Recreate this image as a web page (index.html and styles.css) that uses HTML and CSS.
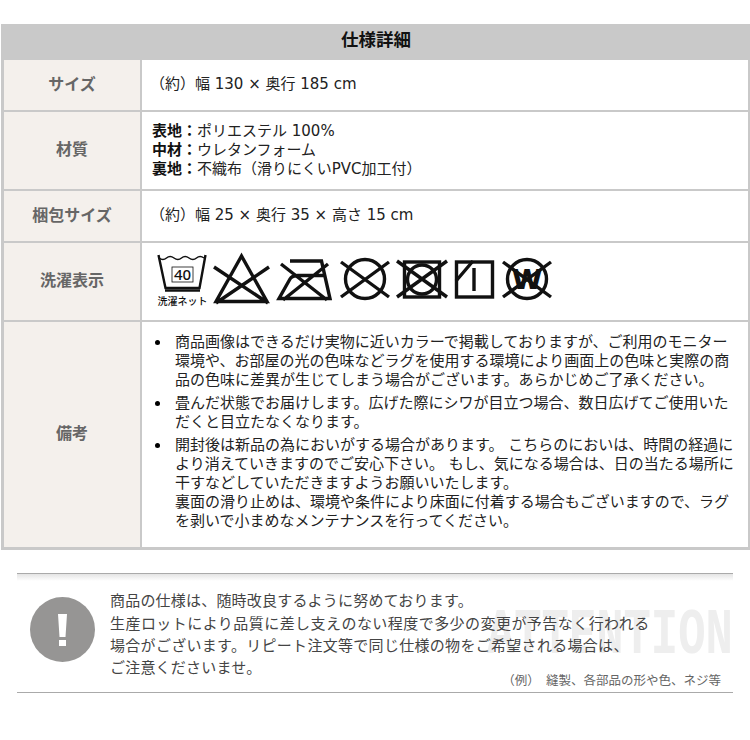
FILE: index.html
```html
<!DOCTYPE html>
<html lang="ja">
<head>
<meta charset="utf-8">
<title>仕様詳細</title>
<link rel="stylesheet" href="styles.css">
</head>
<body>
<section class="spec">
  <h2 class="spec-title">仕様詳細</h2>
  <div class="label row-s">サイズ</div>
  <div class="value indent">（約）幅 130 × 奥行 185 cm</div>
  <div class="label row-m">材質</div>
  <div class="value material">
    <div><b>表地：</b>ポリエステル 100%</div>
    <div><b>中材：</b>ウレタンフォーム</div>
    <div><b>裏地：</b>不織布（滑りにくいPVC加工付）</div>
  </div>
  <div class="label row-s">梱包サイズ</div>
  <div class="value indent">（約）幅 25 × 奥行 35 × 高さ 15 cm</div>
  <div class="label row-m">洗濯表示</div>
  <div class="value icons">
    <svg class="care w61" viewBox="150 250 61 60">
      <path class="s2" d="M158.500 255 165.500 288H199.500L205.500 255"/>
      <path class="s1" d="M159 258q4 3 7.500 0t7.500 0 7.500 0 7.500 0 7.500 0 7.500 0"/>
      <rect class="s0" x="172" y="267" width="21" height="15"/>
      <text class="num" x="182.500" y="280">40</text>
      <path class="s2" d="M165 290.500H200"/>
      <text class="net" x="182.500" y="305">洗濯ネット</text>
    </svg>
    <svg class="care w62" viewBox="211 250 62 60">
      <path class="s3" d="M241.500 256 216 301.500H267ZM214 267 268 303M269 267 216 303"/>
    </svg>
    <svg class="care w63" viewBox="273 250 63 60">
      <path class="s3" d="M290 261H321.500L330 298.500H279L290 279Q292 275.500 298 275.500H325M281 264 327 300M328 264 283 300"/>
    </svg>
    <svg class="care w60" viewBox="336 250 60 60">
      <circle class="s3" cx="365" cy="279" r="19.500"/>
      <path class="s3" d="M341 262 389 297M389 262 341 297"/>
    </svg>
    <svg class="care w54" viewBox="396 250 54 60">
      <rect class="s3" x="404.500" y="262" width="35" height="35"/>
      <circle class="s3" cx="422" cy="279.500" r="14.500"/>
      <path class="s3" d="M397 261 447 297M447 261 397 297"/>
    </svg>
    <svg class="care w48" viewBox="450 250 48 60">
      <rect class="s3" x="456.500" y="262" width="36" height="35"/>
      <path class="s3" d="M456 281 473 261M474 268V291"/>
    </svg>
    <svg class="care w60" viewBox="498 250 60 60">
      <circle class="s3" cx="527" cy="279" r="19.500"/>
      <text class="wash" x="527" y="289">W</text>
      <path class="s3" d="M503 262 551 297M551 262 503 297"/>
    </svg>
  </div>
  <div class="label row-l">備考</div>
  <div class="value notes">
    <ul>
      <li>商品画像はできるだけ実物に近いカラーで掲載しておりますが、ご利用のモニター環境や、お部屋の光の色味などラグを使用する環境により画面上の色味と実際の商品の色味に差異が生じてしまう場合がございます。あらかじめご了承ください。</li>
      <li>畳んだ状態でお届けします。広げた際にシワが目立つ場合、数日広げてご使用いただくと目立たなくなります。</li>
      <li>開封後は新品の為においがする場合があります。 こちらのにおいは、時間の経過により消えていきますのでご安心下さい。 もし、気になる場合は、日の当たる場所に干すなどしていただきますようお願いいたします。<br>裏面の滑り止めは、環境や条件により床面に付着する場合もございますので、ラグを剥いで小まめなメンテナンスを行ってください。</li>
    </ul>
  </div>
</section>
<aside class="notice">
  <span class="watermark">ATTENTION</span>
  <svg class="alert" viewBox="0 0 65 65">
    <circle cx="32.500" cy="32.500" r="32.500"/>
    <path d="M28 17H37L35.500 40H29.500ZM29 43H36V49H29Z"/>
  </svg>
  <div class="notice-text">
    <p>商品の仕様は、随時改良するように努めております。</p>
    <p class="wide">生産ロットにより品質に差し支えのない程度で多少の変更が予告なく行われる</p>
    <p class="mid">場合がございます。リピート注文等で同じ仕様の物をご希望される場合は、</p>
    <p>ご注意くださいませ。</p>
  </div>
  <small class="example">（例）　縫製、各部品の形や色、ネジ等</small>
</aside>
</body>
</html>
```
FILE: styles.css
```css
* { box-sizing: border-box; }
html, body { margin: 0; padding: 0; background: #fff; }
body {
  font-family: "DejaVu Sans", "Noto Sans CJK JP", sans-serif;
  font-size: 15px;
  line-height: 19px;
  color: #222;
  padding-top: 24px;
}
.spec {
  margin-left: 1px;
  display: grid;
  grid-template-columns: 136px 1fr;
  grid-template-rows: 34px 50px 77px 50px 77px 225px;
  column-gap: 2px;
  row-gap: 2px;
  padding: 0 2px 3px 3px;
  background: #c9c9c9;
}
.spec-title {
  grid-column: 1 / -1;
  margin: 0;
  text-align: center;
  font-size: 17.500px;
  line-height: 32px;
  font-weight: 700;
  color: #111;
}
.label {
  background: #f4f0ec;
  color: #666;
  font-size: 16px;
  font-weight: 700;
  display: flex;
  align-items: center;
  justify-content: center;
  padding-bottom: 2px;
}
.value {
  background: #fff;
  padding: 0 0 2px 10px;
  display: flex;
  flex-direction: column;
  justify-content: center;
}
.value b { color: #111; }
.indent { padding-left: 8px; }
.material { padding-bottom: 0; }
.icons {
  flex-direction: row;
  justify-content: flex-start;
  align-items: flex-start;
  padding: 7px 0 0 8px;
}
.care { height: 60px; flex: none; }
.w61 { width: 61px; }
.w62 { width: 62px; }
.w63 { width: 63px; }
.w60 { width: 60px; }
.w54 { width: 54px; }
.w48 { width: 48px; }
.s0, .s1, .s2, .s3 { fill: none; stroke: #111; }
.s0 { stroke-width: .8; }
.s1 { stroke-width: 1.5; }
.s2 { stroke-width: 2.4; }
.s3 { stroke-width: 3.4; }
.num, .net, .wash { text-anchor: middle; fill: #111; }
.num { font-family: "Noto Sans", sans-serif; font-size: 15px; font-weight: 500; }
.net { font-family: "Noto Sans CJK JP", sans-serif; font-size: 10px; font-weight: 500; }
.wash { font-family: "Noto Sans", sans-serif; font-size: 29px; font-weight: 900; }
.notes { padding: 11px 0 0; justify-content: flex-start; }
.notes ul { margin: 0; padding: 0 13px 0 33px; list-style: none; }
.notes li { position: relative; margin-bottom: 4px; }
.notes li:last-child { margin-bottom: 0; }
.notes li::before {
  content: "";
  position: absolute;
  left: -20px;
  top: 7px;
  width: 5px;
  height: 5px;
  border-radius: 50%;
  background: #000;
}
.notice {
  position: relative;
  margin: 23px 17px 0;
  height: 120px;
  display: flex;
  align-items: flex-start;
  gap: 15px;
  padding: 16px 0 0 13px;
  border-top: 1.500px solid #aaa;
  border-bottom: 1.500px solid #aaa;
  color: #444;
}
.notice::before, .notice::after {
  content: "";
  position: absolute;
  left: 0;
  right: 0;
  height: 7px;
  background: linear-gradient(#e4e4e4, #fff);
}
.notice::before { top: 0; }
.notice::after { bottom: -8px; }
.alert { width: 65px; height: 65px; flex: none; margin-top: 7px; }
.alert circle { fill: #969594; }
.alert path { fill: #fff; }
.notice-text { position: relative; }
.notice-text p { margin: 0; line-height: 22px; white-space: nowrap; letter-spacing: .2px; }
.notice-text .wide { margin-top: 1px; letter-spacing: .45px; }
.notice-text .mid { letter-spacing: .3px; }
.watermark {
  position: absolute;
  left: 470px;
  top: 22px;
  width: 390px;
  font-family: "Liberation Mono", monospace;
  font-size: 65px;
  line-height: 80px;
  font-weight: 700;
  color: #eeeeee;
  transform: scaleX(.7);
  transform-origin: 0 0;
}
.example {
  position: absolute;
  right: 12px;
  bottom: 2px;
  font-size: 12.500px;
  line-height: 18px;
  color: #666;
}
```
